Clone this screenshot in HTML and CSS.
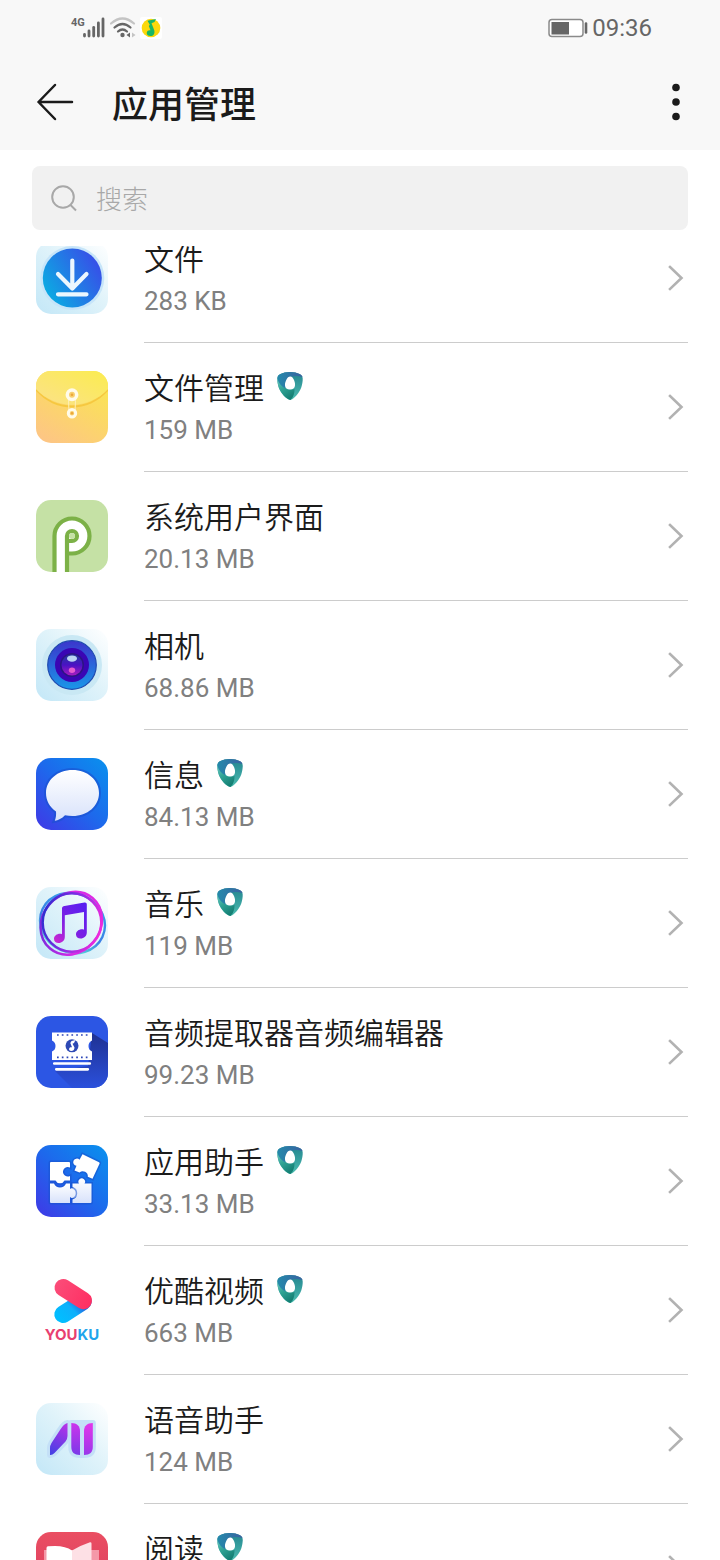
FILE: index.html
```html
<!DOCTYPE html>
<html lang="zh-CN">
<head>
<meta charset="utf-8">
<meta name="viewport" content="width=device-width, initial-scale=1">
<title>应用管理</title>
<link rel="stylesheet" href="styles.css">
</head>
<body>
<svg class="defs" aria-hidden="true">
  <defs>
    <linearGradient id="pale" x1="1" y1="0" x2="0" y2="1"><stop offset="0" stop-color="#fff"/><stop offset=".45" stop-color="#e0f3fa"/><stop offset="1" stop-color="#c3e7f7"/></linearGradient>
    <linearGradient id="blue" x1="1" y1="0" x2="0" y2="1"><stop offset="0" stop-color="#0991ee"/><stop offset=".5" stop-color="#1d69ec"/><stop offset="1" stop-color="#4038e6"/></linearGradient>
    <linearGradient id="down" x1="0" y1=".8" x2="1" y2=".2"><stop offset="0" stop-color="#09b0e2"/><stop offset="1" stop-color="#3a49e8"/></linearGradient>
    <linearGradient id="folder" x1=".8" y1="0" x2=".2" y2="1"><stop offset="0" stop-color="#fae74e"/><stop offset="1" stop-color="#fdc684"/></linearGradient>
    <linearGradient id="flap" x1="1" y1="0" x2="0" y2="1"><stop offset="0" stop-color="#fbec4f"/><stop offset="1" stop-color="#fbe18a"/></linearGradient>
    <linearGradient id="lens" x1="0" y1="0" x2="0" y2="1"><stop offset="0" stop-color="#3b35cc"/><stop offset="1" stop-color="#1a97e8"/></linearGradient>
    <linearGradient id="core" x1="0" y1="0" x2="0" y2="1"><stop offset="0" stop-color="#243b9e"/><stop offset=".5" stop-color="#4a12c4"/><stop offset="1" stop-color="#a71cc0"/></linearGradient>
    <linearGradient id="paper" x1="0" y1="0" x2="0" y2="1"><stop offset="0" stop-color="#fff"/><stop offset="1" stop-color="#d8e2fb"/></linearGradient>
    <linearGradient id="ring" x1="0" y1=".3" x2="1" y2=".6"><stop offset="0" stop-color="#2b2fd0"/><stop offset=".5" stop-color="#8a2be6"/><stop offset="1" stop-color="#f02bdc"/></linearGradient>
    <linearGradient id="ring2" x1="0" y1="0" x2="1" y2="1"><stop offset="0" stop-color="#5a2ad8"/><stop offset=".5" stop-color="#d72be8"/><stop offset="1" stop-color="#e42be0"/></linearGradient>
    <linearGradient id="ring3" x1="0" y1="0" x2="0" y2="1"><stop offset="0" stop-color="#35a8ea"/><stop offset=".6" stop-color="#3c7fe6"/><stop offset="1" stop-color="#5ce6d6"/></linearGradient>
    <linearGradient id="note" x1=".8" y1="0" x2="0" y2="1"><stop offset="0" stop-color="#5a1ff0"/><stop offset=".5" stop-color="#7b20e4"/><stop offset="1" stop-color="#d128cf"/></linearGradient>
    <linearGradient id="shade" x1="0" y1="0" x2="0" y2="1"><stop offset="0" stop-color="#1f3192"/><stop offset="1" stop-color="#2b50dc"/></linearGradient>
    <linearGradient id="ai1" x1=".6" y1="0" x2=".3" y2="1"><stop offset="0" stop-color="#b234e8"/><stop offset="1" stop-color="#4840e4"/></linearGradient>
    <linearGradient id="ai2" x1="0" y1="0" x2="0" y2="1"><stop offset="0" stop-color="#cc34ec"/><stop offset="1" stop-color="#7a3ae8"/></linearGradient>
    <linearGradient id="ai3" x1="0" y1="0" x2="0" y2="1"><stop offset="0" stop-color="#e436ea"/><stop offset="1" stop-color="#9a38ea"/></linearGradient>
    <linearGradient id="ykr" gradientUnits="userSpaceOnUse" x1="20" y1="10" x2="56" y2="30"><stop offset="0" stop-color="#fb4c78"/><stop offset="1" stop-color="#ff2e62"/></linearGradient>
    <linearGradient id="ykb" gradientUnits="userSpaceOnUse" x1="24" y1="44" x2="42" y2="27"><stop offset="0" stop-color="#02bdff"/><stop offset=".6" stop-color="#0eb0fb"/><stop offset="1" stop-color="#2468e0"/></linearGradient>
    <linearGradient id="red" x1="0" y1="0" x2="0" y2="1"><stop offset="0" stop-color="#ea4e62"/><stop offset="1" stop-color="#d93a60"/></linearGradient>
    <linearGradient id="sh1" x1="0" y1="0" x2="1" y2="0"><stop offset="0" stop-color="#2489ab"/><stop offset="1" stop-color="#3a62a0"/></linearGradient>
    <linearGradient id="sh2" x1="0" y1="0" x2=".6" y2="1"><stop offset="0" stop-color="#6cc9c0"/><stop offset=".5" stop-color="#2fa394"/><stop offset="1" stop-color="#157f74"/></linearGradient>
    <linearGradient id="sh3" x1="0" y1="0" x2="0" y2="1"><stop offset="0" stop-color="#23848f"/><stop offset="1" stop-color="#4cbdb0"/></linearGradient>
  </defs>
  <symbol id="shield" viewBox="0 0 26 28">
    <path d="M13 0C17 0 20 .8 22.500 2C25 3.200 26 5 25.700 8C25.200 14 24 17.500 21 21.500C19 24 16.500 27 13.500 28C10.500 27.500 7 24.500 5 21.500C2 17.500 .800 14 .300 8C0 5 1 3.200 3.500 2C6 .8 9 0 13 0Z" fill="url(#sh3)"/>
    <path d="M.500 6C.3 8 .5 10 1 12.500C2 17 4 20.500 7 23.800C9 26 11.500 27.600 13.500 28C16.500 25 17.500 21.500 17.500 17C10 19.500 3 14 .500 6Z" fill="url(#sh2)"/>
    <path d="M.500 6.500C.5 4 1.500 2.800 3.500 2C6 .8 9 0 13 0C17 0 20 .8 22.500 2C24 2.700 25 3.600 25.500 5C21 3.500 17 3.500 13.500 5C9.500 7 7.800 10 8.500 16.500C4.500 14.500 1.500 11 .500 6.500Z" fill="url(#sh1)"/>
    <path d="M13.300 4.500C15 4.700 16.200 6 17 8C17.800 10 18.200 11.500 18 13.500C17.800 16.300 16 17.500 13 17.500C10 17.500 8.200 16.300 8 13.500C7.800 11.500 8.500 9.500 9.500 7.500C10.400 5.800 11.600 4.500 13.300 4.500Z" fill="#fff"/>
  </symbol>
  <symbol id="chevron" viewBox="0 0 16 26"><path d="M2 2L13.500 13L2 24" fill="none" stroke="#b2b2b2" stroke-width="2.600" stroke-linecap="square"/></symbol>
</svg>

<div class="status">
  <div class="status-group">
    <svg width="36" height="24" viewBox="0 0 36 24" role="img" aria-label="4G">
      <text x="1" y="10" class="net">4G</text>
      <g fill="none" stroke="#666" stroke-width="2.800" stroke-linecap="round"><path d="M14.500 20v-1.500"/><path d="M19 20v-5"/><path d="M23.700 20v-8.500"/><path d="M28.400 20V7"/><path d="M33 20V3"/></g>
    </svg>
    <svg width="26" height="24" viewBox="0 2 26 24" aria-hidden="true">
      <g fill="none" stroke-width="2.200" stroke-linecap="round"><path d="M1 9.500Q12.500 -.5 24 9.500" stroke="#c4c4c4"/><path d="M4.500 13.500Q12.500 6.500 20.500 13.500" stroke="#666"/><path d="M8 17.500Q12.500 13.500 17 17.500" stroke="#666"/></g>
      <circle cx="12.500" cy="21" r="2.200" fill="#666"/><path d="M20 18.500v5l-3.500-2.500z" fill="#666"/><path d="M22 18.500v5l3.500-2.500z" fill="#c4c4c4"/>
    </svg>
    <svg width="22" height="22" viewBox="0 0 22 22" aria-hidden="true">
      <rect width="22" height="22" rx="2" fill="#fff"/><circle cx="11" cy="11" r="9.300" fill="#fbd80b"/>
      <path d="M7.500 3.800L16 2L14.500 5L11.500 6.300L13 10L14.300 13.500C15 17 13.500 19 10.500 19C8 19 6.300 17.500 6.800 15.500C7.200 13.800 8.500 13 10.500 13.300L8.800 9L9.800 7.800Z" fill="#18b765"/>
    </svg>
  </div>
  <div class="status-group">
    <svg width="40" height="20" viewBox="0 0 40 20" aria-hidden="true"><rect x="1" y="1.500" width="34" height="17" rx="3" fill="#fff" stroke="#8a8a8a" stroke-width="1.500"/><rect x="3.500" y="4" width="17.500" height="12.500" fill="#666"/><path d="M38 5.500v9" stroke="#666" stroke-width="2.600" stroke-linecap="round"/></svg>
    <time class="clock">09:36</time>
  </div>
</div>

<header class="header">
  <button class="icon-btn" type="button" aria-label="返回">
    <svg width="40" height="40" viewBox="0 0 40 40"><path d="M20 3L3.500 20L20 37M3.500 20H37" fill="none" stroke="#1b1b1b" stroke-width="2.500" stroke-linecap="round" stroke-linejoin="round"/></svg>
  </button>
  <h1 class="title">应用管理</h1>
  <button class="icon-btn" type="button" aria-label="更多">
    <svg width="16" height="40" viewBox="0 0 16 40"><g fill="#1b1b1b"><circle cx="8" cy="5.500" r="3.800"/><circle cx="8" cy="20" r="3.800"/><circle cx="8" cy="34.500" r="3.800"/></g></svg>
  </button>
</header>

<label class="search">
  <svg width="28" height="28" viewBox="0 0 28 28" aria-hidden="true"><path d="M20 20.500L26 26.500" stroke="#a8a8a8" stroke-width="2" fill="none"/><circle cx="13" cy="13" r="10.800" fill="none" stroke="#a8a8a8" stroke-width="2"/></svg>
  <input class="search-input" type="search" placeholder="搜索" aria-label="搜索">
</label>

<main class="viewport">
<ul class="list">
  <li><a class="row" href="#files">
    <svg class="app" viewBox="0 0 72 72" aria-hidden="true"><rect width="72" height="72" rx="15" fill="url(#pale)"/><circle cx="36.300" cy="36" r="32" fill="#c7e5f9"/><circle cx="36.300" cy="36" r="29.500" fill="url(#down)"/><path d="M36.300 18.500V46M22 32L36.300 46.500L50.500 32M22 52.300H50.500" fill="none" stroke="#ecf7fe" stroke-width="4.200" stroke-linecap="round" stroke-linejoin="round"/></svg>
    <span class="body"><span class="text"><span class="name">文件</span><span class="size">283 KB</span></span><svg class="chev"><use href="#chevron"/></svg></span></a></li>
  <li><a class="row" href="#filemanager">
    <svg class="app" viewBox="0 0 72 72" aria-hidden="true"><rect width="72" height="72" rx="15" fill="url(#folder)"/><path d="M0 18C20 40 52 40 72 18V20C52 42 20 42 0 20Z" fill="#f6c840"/><path d="M0 18V15A15 15 0 0 1 15 0H57A15 15 0 0 1 72 15V18C52 39 20 39 0 18Z" fill="url(#flap)"/><path d="M32.500 28L33 42M39.500 28L39 42" stroke="#fff0b8"/><circle cx="36" cy="23.800" r="4.700" fill="#f9cf6b" stroke="#fffbea" stroke-width="3.500"/><circle cx="36" cy="42.300" r="3.700" fill="#f9cf6b" stroke="#fffbea" stroke-width="3"/><circle cx="36" cy="23.800" r="1.300" fill="#eba53a"/><circle cx="36" cy="42.300" r="1.200" fill="#eba53a"/></svg>
    <span class="body"><span class="text"><span class="name">文件管理<svg class="shield"><use href="#shield"/></svg></span><span class="size">159 MB</span></span><svg class="chev"><use href="#chevron"/></svg></span></a></li>
  <li><a class="row" href="#systemui">
    <svg class="app" viewBox="0 0 72 72" aria-hidden="true"><rect width="72" height="72" rx="15" fill="#c5e1a5"/><path d="M18.500 72V36A17.500 17.500 0 1 1 36 53.500H31V72Z" fill="#fff"/><path d="M18.500 72V36A17.500 17.500 0 1 1 36 53.500H31" fill="none" stroke="#7cb147" stroke-width="4.200"/><path d="M31 72V36A5 5 0 1 1 36 41H31" fill="none" stroke="#7cb147" stroke-width="4.200"/><circle cx="36" cy="36" r="3" fill="#c5e1a5"/></svg>
    <span class="body"><span class="text"><span class="name">系统用户界面</span><span class="size">20.13 MB</span></span><svg class="chev"><use href="#chevron"/></svg></span></a></li>
  <li><a class="row" href="#camera">
    <svg class="app" viewBox="0 0 72 72" aria-hidden="true"><rect width="72" height="72" rx="15" fill="url(#pale)"/><circle cx="36" cy="36" r="30" fill="#c9e8f4"/><circle cx="36" cy="36" r="24.300" fill="url(#lens)" stroke="#204bb0" stroke-width="1.200"/><circle cx="36" cy="36" r="17" fill="#3a05b4"/><circle cx="36" cy="36" r="12" fill="#2c1484"/><circle cx="36" cy="36" r="10.500" fill="url(#core)"/><ellipse cx="36" cy="29.600" rx="5" ry="3.200" fill="#bcd3f4"/><ellipse cx="36" cy="41.300" rx="3.200" ry="2.700" fill="#e35ccf"/></svg>
    <span class="body"><span class="text"><span class="name">相机</span><span class="size">68.86 MB</span></span><svg class="chev"><use href="#chevron"/></svg></span></a></li>
  <li><a class="row" href="#messages">
    <svg class="app" viewBox="0 0 72 72" aria-hidden="true"><rect width="72" height="72" rx="15" fill="url(#blue)"/><path d="M36.500 12C51.500 12 63 22 63 35C63 48 51.500 58 36.500 58C34 58 31.500 57.700 29 57.300C26 60.500 22 62.300 18.800 62.800C20 60 20.300 56.500 20 53.500C13.700 49 10 42.500 10 35C10 22 21.500 12 36.500 12Z" fill="url(#paper)" stroke="#1b50cf" stroke-opacity=".6" stroke-width="4" paint-order="stroke"/></svg>
    <span class="body"><span class="text"><span class="name">信息<svg class="shield"><use href="#shield"/></svg></span><span class="size">84.13 MB</span></span><svg class="chev"><use href="#chevron"/></svg></span></a></li>
  <li><a class="row" href="#music">
    <svg class="app" viewBox="0 0 72 72" aria-hidden="true"><rect width="72" height="72" rx="15" fill="url(#pale)"/><g fill="none"><ellipse cx="36.500" cy="36" rx="33" ry="29.500" transform="rotate(25 36.500 36)" stroke="url(#ring3)" stroke-width="2.400"/><ellipse cx="35.300" cy="36.300" rx="33" ry="29" transform="rotate(-50 35.300 36.300)" stroke="url(#ring2)" stroke-width="2.600"/><circle cx="36" cy="35.500" r="29.300" stroke="url(#ring)" stroke-width="2.400"/></g><path d="M26 21.500C26 20 27 19.200 28.500 18.900L48.500 15.500C50 15.300 50.800 16 50.800 17.500V45.500C50.800 49 48 51.500 44.500 51.500C42 51.500 40 50 40 47.500C40 44.500 42.800 42.300 46 42.300C46.800 42.300 47.500 42.400 48 42.700V25L28.800 28.300V50C28.800 53.500 26 56 22.500 56C20 56 18 54.500 18 52C18 49 20.800 46.800 24 46.800C24.800 46.800 25.500 46.900 26 47.200Z" fill="url(#note)"/></svg>
    <span class="body"><span class="text"><span class="name">音乐<svg class="shield"><use href="#shield"/></svg></span><span class="size">119 MB</span></span><svg class="chev"><use href="#chevron"/></svg></span></a></li>
  <li><a class="row" href="#audio">
    <svg class="app" viewBox="0 0 72 72" aria-hidden="true"><rect width="72" height="72" rx="15" fill="#2c56e4"/><path d="M56 17L72 27V57A15 15 0 0 1 57 72H36L19 55L52 50Z" fill="url(#shade)"/><path d="M16 16.500H56V24.500Q52.500 26 52.500 30T56 35.500V44H16V35.500Q19.500 34 19.500 30T16 24.500Z" fill="#fff"/><path d="M21 19H53M21 41.300H53" stroke="#2c46b8" stroke-width="1.700" stroke-dasharray="1.700 3.100"/><circle cx="36" cy="29.800" r="6.500" fill="#2d49b4"/><path d="M35.500 25L39.500 24L38 27L36.500 27.800L38.500 31.500C38.500 34 37 35 35.300 35C33.500 35 32.800 33.800 33.200 32.500C33.500 31.500 34.500 31 36 31.200L34.300 27Z" fill="#fff"/><path d="M18.300 47.500H53.800M20.300 53.300H51.800" stroke="#fff" stroke-width="2.700" stroke-linecap="round"/></svg>
    <span class="body"><span class="text"><span class="name">音频提取器音频编辑器</span><span class="size">99.23 MB</span></span><svg class="chev"><use href="#chevron"/></svg></span></a></li>
  <li><a class="row" href="#assistant">
    <svg class="app" viewBox="0 0 72 72" aria-hidden="true"><rect width="72" height="72" rx="15" fill="url(#blue)"/><g stroke="#1852cc" stroke-opacity=".55" stroke-width="3" paint-order="stroke"><path d="M15 17H33Q34 17 34 18V22.500A4.800 4.800 0 1 0 34 31V35.500H28.500A5 5 0 0 1 19.500 35.500H14V18Q14 17 15 17Z" fill="#fff"/><path d="M14 38.500H18A6.500 6.500 0 0 0 30 38.500H34V44A5 5 0 1 1 34 52V58H15Q14 58 14 57Z" fill="url(#paper)"/><path d="M36.500 38.500H43A3.300 3.300 0 1 1 48.500 38.500H55.500V57Q55.500 58 54.500 58H36.500V54.500A6.500 6.500 0 0 0 36.500 42Z" fill="url(#paper)"/><path d="M46.500 9.200L63 17.200Q64 17.700 63.500 18.700L56.500 33.800L51.800 31.800A5 5 0 0 0 43.500 27.500L38.500 25.500L40.500 20.800A3.600 3.600 0 1 1 43.500 14.800Z" fill="#fff"/></g></svg>
    <span class="body"><span class="text"><span class="name">应用助手<svg class="shield"><use href="#shield"/></svg></span><span class="size">33.13 MB</span></span><svg class="chev"><use href="#chevron"/></svg></span></a></li>
  <li><a class="row" href="#youku">
    <svg class="app" viewBox="0 0 72 72" role="img" aria-label="YOUKU"><path d="M27 40.300L47 27.500" stroke="url(#ykb)" stroke-width="17.400" stroke-linecap="round"/><path d="M27.200 13.700L47.300 26.500" stroke="url(#ykr)" stroke-width="17.400" stroke-linecap="round"/><text class="youku" x="36" y="66" text-anchor="middle" fill="#e83f70">YOU<tspan fill="#1fa5ec">KU</tspan></text></svg>
    <span class="body"><span class="text"><span class="name">优酷视频<svg class="shield"><use href="#shield"/></svg></span><span class="size">663 MB</span></span><svg class="chev"><use href="#chevron"/></svg></span></a></li>
  <li><a class="row" href="#voice">
    <svg class="app" viewBox="0 0 72 72" aria-hidden="true"><rect width="72" height="72" rx="15" fill="url(#pale)"/><g fill="#c4e0f7" stroke="#c4e0f7" stroke-width="6" stroke-linejoin="round"><path d="M14 51V45Q14 42.500 15.500 40L24 27Q28 20.500 31.500 20V33Q31.500 36 29.500 38.500L18.500 50Q16 52.500 14 52Z"/><path d="M35.300 20H56.800V44C56.800 49 54 52 48 52H44C38 52 35.300 49 35.300 44Z"/></g><path d="M14 51V45Q14 42.500 15.500 40L24 27Q28 20.500 31.500 20V33Q31.500 36 29.500 38.500L18.500 50Q16 52.500 14 52Z" fill="url(#ai1)"/><path d="M35.300 20C41 20 44 23 44 28V52C38 52 35.300 49 35.300 44Z" fill="url(#ai2)"/><path d="M56.800 20C51 20 48 23 48 28V52C54 52 56.800 49 56.800 44Z" fill="url(#ai3)"/></svg>
    <span class="body"><span class="text"><span class="name">语音助手</span><span class="size">124 MB</span></span><svg class="chev"><use href="#chevron"/></svg></span></a></li>
  <li><a class="row" href="#reader">
    <svg class="app" viewBox="0 0 72 72" aria-hidden="true"><rect width="72" height="72" rx="15" fill="url(#red)"/><path d="M8 18H63V56H8Z" fill="#f498a8"/><path d="M10.500 16Q10.500 14.500 12 14.300Q28 12.500 36 18.500V58Q26 52 10.500 54Z" fill="#fff"/><path d="M36 18.500Q44 13.500 54 10.200Q55.500 10 55.500 11.500V48Q44 51 36 58Z" fill="#fde0e5"/></svg>
    <span class="body"><span class="text"><span class="name">阅读<svg class="shield"><use href="#shield"/></svg></span><span class="size">105 MB</span></span><svg class="chev"><use href="#chevron"/></svg></span></a></li>
</ul>
</main>
</body>
</html>
```

FILE: styles.css
```css
* {
  box-sizing: border-box;
}

body {
  margin: 0;
  height: 100vh;
  display: flex;
  flex-direction: column;
  overflow: hidden;
  background: #fff;
  color: #1b1b1b;
  font-family: Roboto, "Noto Sans CJK SC", sans-serif;
}

.defs {
  position: absolute;
  width: 0;
  height: 0;
}

.status {
  flex: none;
  display: flex;
  justify-content: space-between;
  align-items: center;
  height: 56px;
  padding: 0 68px 0 70px;
  background: #f8f8f8;
}

.status-group {
  display: flex;
  align-items: center;
  gap: 4px;
}

.net {
  font: 700 11px Roboto, sans-serif;
  fill: #666;
}

.clock {
  font-size: 24px;
  line-height: 32px;
  color: #666;
}

.header {
  flex: none;
  display: flex;
  align-items: center;
  height: 94px;
  padding: 0 36px 2px 35px;
  background: #f8f8f8;
}

.icon-btn {
  display: flex;
  padding: 0;
  border: 0;
  background: none;
}

.title {
  flex: 1;
  margin: 0 0 0 37px;
  padding-top: 7px;
  font-size: 36px;
  line-height: 48px;
  font-weight: 500;
}

.search {
  flex: none;
  display: flex;
  align-items: center;
  gap: 18px;
  height: 64px;
  margin: 16px 32px;
  padding: 0 18px;
  border-radius: 8px;
  background: #f1f1f1;
}

.search-input {
  flex: 1;
  min-width: 0;
  padding: 4px 0 0;
  border: 0;
  outline: 0;
  background: none;
  font: inherit;
  font-size: 26px;
  font-weight: 300;
  line-height: 40px;
}

.search-input::placeholder {
  color: #a8a8a8;
}

.viewport {
  flex: 1;
  min-height: 0;
  overflow: hidden;
}

/* The list is scrolled partly under the search box. */
.list {
  margin: -32px 0 0;
  padding: 0 32px 0 36px;
  list-style: none;
}

.row {
  display: flex;
  align-items: center;
  gap: 36px;
  color: inherit;
  text-decoration: none;
}

.app {
  flex: none;
  width: 72px;
  height: 72px;
  margin-bottom: 1px;
}

.body {
  flex: 1;
  display: flex;
  align-items: center;
  height: 129px;
  border-bottom: 1px solid #ccc;
}

.text {
  flex: 1;
  display: flex;
  flex-direction: column;
  gap: 1px;
  padding-top: 1px;
}

.name {
  display: flex;
  align-items: center;
  gap: 13px;
  font-size: 30px;
  font-weight: 350;
  line-height: 44px;
}

.size {
  font-size: 26px;
  line-height: 36px;
  color: #808080;
}

.shield {
  width: 26px;
  height: 28px;
  margin-bottom: 6px;
}

.chev {
  flex: none;
  width: 16px;
  height: 26px;
  margin-right: 4px;
}

.youku {
  font: 700 15px Inter, sans-serif;
}
```
